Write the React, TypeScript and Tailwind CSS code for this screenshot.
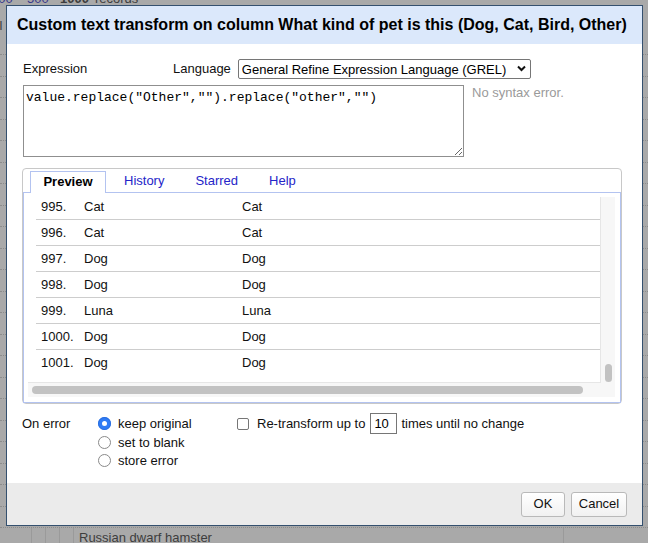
import React from "react";

const rows: [string, string, string][] = [
  ["995.", "Cat", "Cat"],
  ["996.", "Cat", "Cat"],
  ["997.", "Dog", "Dog"],
  ["998.", "Dog", "Dog"],
  ["999.", "Luna", "Luna"],
  ["1000.", "Dog", "Dog"],
  ["1001.", "Dog", "Dog"],
];

function Radio({ checked }: { checked?: boolean }) {
  return checked ? (
    <span className="flex h-[13px] w-[13px] items-center justify-center rounded-full bg-[#2f7bf5] shadow-[inset_0_0_0_1px_#2a6fe0]">
      <span className="h-[5px] w-[5px] rounded-full bg-white" />
    </span>
  ) : (
    <span className="h-[13px] w-[13px] rounded-full border border-[#8a8a8a] bg-white" />
  );
}

function Background() {
  return (
    <div className="flex h-full flex-col text-[13px] text-[#3d3d3d]">
      <div className="mt-[-9px] flex h-[16px] shrink-0 items-center whitespace-nowrap">
        <span className="ml-[-9px] w-[36px] text-[#3a3a8c]">100</span>
        <span className="w-[33px] text-[#3a3a8c]">500</span>
        <span className="w-[35px] font-bold">1000</span>
        <span>records</span>
      </div>
      <div className="relative h-[26.5px] shrink-0">
        <span className="absolute left-[-4px] top-[9px]">tl</span>
      </div>
      {Array.from({ length: 23 }, (_, i) => (
        <div key={i} className="h-[21.5px] shrink-0 border-b border-dotted border-[#8c8c8c]" />
      ))}
      <div className="flex h-[21.5px] shrink-0 border-b border-dotted border-[#8c8c8c]">
        <div className="w-[32px] border-r border-[#9a9a9a]" />
        <div className="w-[14px] border-r border-[#9a9a9a]" />
        <div className="w-[14px] border-r border-[#9a9a9a]" />
        <div className="w-[14px] border-r border-[#9a9a9a]" />
        <div className="w-[490px] border-r border-[#9a9a9a] pl-[5px] pt-[1px] leading-[18px]">
          Russian dwarf hamster
        </div>
      </div>
    </div>
  );
}

export default function App() {
  return (
    <div className="relative h-[543px] w-[648px] overflow-hidden bg-[#a9a9a9] font-['Liberation_Sans',Arial,Helvetica,sans-serif] text-[13px] text-[#111]">
      <Background />

      <div className="absolute left-[6px] top-[5px] flex h-[521px] w-[637px] flex-col border border-[#34506f] bg-white">
        <div className="flex h-[38px] shrink-0 items-center bg-[#dbe8fb] pl-[10px] text-[16px] font-bold text-black">
          Custom text transform on column What kind of pet is this (Dog, Cat, Bird, Other)
        </div>

        <div className="flex flex-1 flex-col pl-[16px] pt-[15px]">
          <div className="flex h-[20px] items-center">
            <span className="w-[150px]">Expression</span>
            <span>Language</span>
            <div className="relative ml-[7px] h-[20px] w-[293px]">
              <select className="h-full w-full appearance-none rounded-[2px] border border-[#767676] bg-white pl-[3px] text-[13px] text-black outline-none">
                <option>General Refine Expression Language (GREL)</option>
              </select>
              <svg
                className="pointer-events-none absolute right-[5px] top-[6px]"
                width="9"
                height="7"
                viewBox="0 0 9 7"
              >
                <path d="M1 1.5 L4.5 5 L8 1.5" fill="none" stroke="#111" strokeWidth="2" />
              </svg>
            </div>
          </div>

          <div className="mt-[6px] flex items-start">
            <textarea
              className="h-[72px] w-[441px] border border-[#8f8f8f] px-[2px] py-[4px] font-['Liberation_Mono','Courier_New',monospace] text-[13px] leading-[15px] text-black outline-none"
              defaultValue={'value.replace("Other","").replace("other","")'}
            />
            <span className="ml-[8px] leading-[15px] text-[#9a9a9a]">No syntax error.</span>
          </div>

          <div className="ml-[-1px] mt-[11px] flex h-[236px] w-[600px] flex-col rounded-[4px] border border-[#c8c8c8]">
            <div className="flex h-[23px] shrink-0 items-end pl-[7px]">
              <div className="relative z-10 mb-[-1px] flex h-[22px] w-[76px] items-center justify-center border border-b-0 border-[#b3c3f0] bg-white pb-[1px] font-bold text-black">
                Preview
              </div>
              <div className="flex h-[22px] items-center gap-[31px] pl-[18px] text-[#2525c8]">
                <span>History</span>
                <span>Starred</span>
                <span>Help</span>
              </div>
            </div>

            <div className="flex-1 border border-[#b3c3f0] pb-[5px] pl-[4px] pr-[6px] pt-[4px]">
              <div className="grid h-[200px] w-[587px] grid-cols-[573px_14px] grid-rows-[186px_14px] bg-[#f7f7f7]">
                <div className="overflow-hidden border-b border-r border-[#e6e6e6] bg-white pl-[8px]">
                  <div className="mt-[-3px]">
                    {rows.map(([n, v, r], i) => (
                      <div
                        key={n}
                        className={
                          i < rows.length - 1
                            ? "flex h-[26px] items-center border-b border-[#cdcdcd] pl-[5px]"
                            : "flex h-[25px] items-center pl-[5px]"
                        }
                      >
                        <span className="w-[43px]">{n}</span>
                        <span className="w-[158px]">{v}</span>
                        <span>{r}</span>
                      </div>
                    ))}
                  </div>
                </div>
                <div className="flex flex-col justify-end pb-[1px] pl-[4px]">
                  <div className="h-[18px] w-[7px] rounded-full bg-[#c2c2c2]" />
                </div>
                <div className="flex items-center pl-[4px]">
                  <div className="h-[8px] w-[551px] rounded-full bg-[#c2c2c2]" />
                </div>
                <div />
              </div>
            </div>
          </div>

          <div className="ml-[-1px] mt-[10px] flex">
            <span className="w-[76px] pt-[2px] leading-[15px]">On error</span>
            <div className="flex w-[139px] flex-col">
              <label className="flex h-[19px] items-center">
                <Radio checked />
                <span className="ml-[7px]">keep original</span>
              </label>
              <label className="flex h-[18.5px] items-center">
                <Radio />
                <span className="ml-[7px]">set to blank</span>
              </label>
              <label className="flex h-[18.5px] items-center">
                <Radio />
                <span className="ml-[7px]">store error</span>
              </label>
            </div>
            <div className="flex h-[19px] items-center">
              <span className="h-[12px] w-[12px] rounded-[2px] border border-[#767676] bg-white" />
              <span className="ml-[8px]">Re-transform up to</span>
              <input
                className="ml-[5px] h-[21px] w-[27px] border border-[#767676] pl-[3px] text-[13px] text-black outline-none"
                defaultValue="10"
              />
              <span className="ml-[4px]">times until no change</span>
            </div>
          </div>
        </div>

        <div className="flex h-[42px] shrink-0 items-center justify-end gap-[6px] bg-[#ebebeb] pr-[15px]">
          <button className="h-[25px] w-[44px] rounded-[3px] border border-[#b9b9b9] bg-gradient-to-b from-white to-[#f1f1f1] text-[13px] text-[#111]">
            OK
          </button>
          <button className="h-[25px] w-[56px] rounded-[3px] border border-[#b9b9b9] bg-gradient-to-b from-white to-[#f1f1f1] text-[13px] text-[#111]">
            Cancel
          </button>
        </div>
      </div>
    </div>
  );
}
